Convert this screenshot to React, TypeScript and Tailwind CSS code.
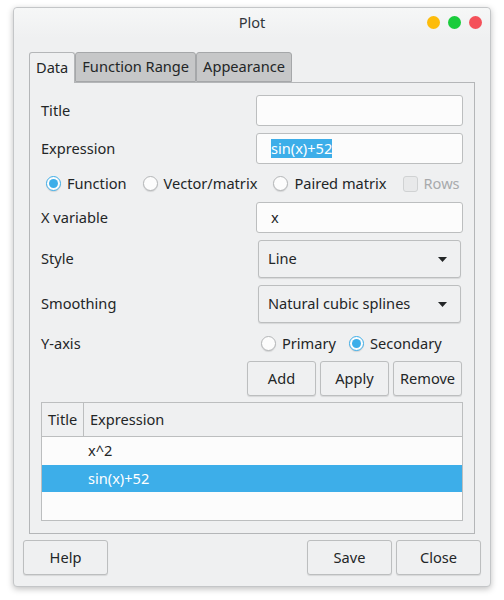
import React from "react";

const font = { fontFamily: '"Noto Sans", "Open Sans", sans-serif' };

const Radio = ({ checked, label }: { checked?: boolean; label: string }) => (
  <label className="flex items-center gap-[6px] whitespace-nowrap">
    <span
      className={`w-[15px] h-[15px] rounded-full border flex items-center justify-center ${
        checked ? "border-[#3daee9] bg-[#fcfcfc]" : "border-[#b4b6b8] bg-[#fcfcfc]"
      } shadow-[0_1px_1px_rgba(0,0,0,0.12)]`}
    >
      {checked && <span className="w-[9px] h-[9px] rounded-full bg-[#3daee9]" />}
    </span>
    <span>{label}</span>
  </label>
);

const Button = ({ children, className = "" }: { children: React.ReactNode; className?: string }) => (
  <button
    className={`flex items-center justify-center rounded-[3px] border border-[#bcbebf] bg-[#eff0f1] shadow-[0_1px_1px_rgba(0,0,0,0.1)] ${className}`}
  >
    {children}
  </button>
);

const Combo = ({ value }: { value: string }) => (
  <div className="ml-[2px] w-[203px] h-[38px] flex items-center justify-between pl-[9px] pr-[13px] rounded-[3px] border border-[#bcbebf] bg-[#eff0f1] shadow-[0_1px_1px_rgba(0,0,0,0.1)]">
    <span>{value}</span>
    <svg width="9" height="5" viewBox="0 0 9 5">
      <path d="M0 0 L9 0 L4.5 5 Z" fill="#232627" />
    </svg>
  </div>
);

const Field = ({ children }: { children?: React.ReactNode }) => (
  <div className="w-[207px] h-[31px] flex items-center px-[14px] rounded-[3px] border border-[#bcbebf] bg-[#fcfcfc]">
    {children}
  </div>
);

export default function App() {
  return (
    <div className="w-[504px] h-[600px] bg-white pt-[7px] pl-[13px] text-[14.6px] text-[#232627]" style={font}>
      <div className="w-[478px] h-[580px] flex flex-col bg-[#eff0f1] rounded-[4px] border border-[#c4c6c8] shadow-[0_2px_6px_rgba(0,0,0,0.25)]">
        {/* Title bar */}
        <div className="relative h-[30px] flex items-center justify-center bg-gradient-to-b from-[#f6f7f7] to-[#eff0f1] rounded-t-[4px]">
          <span className="text-[#31363b] -mt-[1px]">Plot</span>
          <div className="absolute right-[8px] top-[8px] flex gap-[8px]">
            <span className="w-[13px] h-[13px] rounded-full bg-[#fdbc0b]" />
            <span className="w-[13px] h-[13px] rounded-full bg-[#1acc3c]" />
            <span className="w-[13px] h-[13px] rounded-full bg-[#f4515a]" />
          </div>
        </div>

        {/* Tabs */}
        <div className="mt-[14px] ml-[15px] flex">
          <div className="relative z-10 h-[31px] px-[6px] flex items-center border border-b-0 border-[#b4b6b8] rounded-t-[3px] bg-[#eff0f1]">
            Data
          </div>
          <div className="h-[30px] px-[6px] flex items-center border border-[#a5a7a9] rounded-t-[3px] bg-[#c6c7c8]">
            Function Range
          </div>
          <div className="h-[30px] px-[6px] flex items-center border border-[#a5a7a9] rounded-t-[3px] bg-[#c6c7c8]">
            Appearance
          </div>
        </div>

        {/* Tab panel */}
        <div className="-mt-[1px] ml-[15px] w-[446px] h-[452px] border border-[#b4b6b8] px-[11px] pt-[12px] flex flex-col">
          <div className="flex items-center justify-between h-[31px]">
            <span>Title</span>
            <Field />
          </div>
          <div className="mt-[7px] flex items-center justify-between h-[31px]">
            <span>Expression</span>
            <Field>
              <span className="bg-[#3daee9] text-white leading-[19px]">sin(x)+52</span>
            </Field>
          </div>
          <div className="mt-[7px] h-[26px] flex items-center pl-[5px] gap-[16px]">
            <Radio checked label="Function" />
            <Radio label="Vector/matrix" />
            <Radio label="Paired matrix" />
            <label className="flex items-center gap-[6px] text-[#a8aaac]">
              <span className="w-[15px] h-[16px] rounded-[3px] border border-[#d0d2d3] bg-[#e8e9ea]" />
              <span>Rows</span>
            </label>
          </div>
          <div className="mt-[5px] flex items-center justify-between h-[31px]">
            <span>X variable</span>
            <Field>x</Field>
          </div>
          <div className="mt-[7px] flex items-center justify-between h-[38px]">
            <span>Style</span>
            <div className="w-[207px]"><Combo value="Line" /></div>
          </div>
          <div className="mt-[7px] flex items-center justify-between h-[38px]">
            <span>Smoothing</span>
            <div className="w-[207px]"><Combo value="Natural cubic splines" /></div>
          </div>
          <div className="mt-[8px] flex items-center justify-between h-[26px]">
            <span>Y-axis</span>
            <div className="w-[207px] flex items-center pl-[5px] gap-[13px]">
              <Radio label="Primary" />
              <Radio checked label="Secondary" />
            </div>
          </div>
          <div className="mt-[4px] flex justify-end gap-[4px] pr-[1px]">
            <Button className="w-[69px] h-[35px]">Add</Button>
            <Button className="w-[69px] h-[35px]">Apply</Button>
            <Button className="w-[69px] h-[35px]">Remove</Button>
          </div>

          {/* Table */}
          <div className="mt-[6px] w-[422px] h-[119px] border border-[#bcbebf] bg-[#fcfcfc] flex flex-col">
            <div className="h-[34px] flex bg-[#eff0f1] border-b border-[#bcbebf]">
              <div className="w-[42px] flex items-center pl-[6px] border-r border-[#bcbebf]">Title</div>
              <div className="flex items-center pl-[6px]">Expression</div>
            </div>
            <div className="h-[28px] flex items-center pl-[46px]">x^2</div>
            <div className="h-[27px] flex items-center pl-[46px] bg-[#3daee9] text-white">sin(x)+52</div>
          </div>
        </div>

        {/* Bottom buttons */}
        <div className="mt-[6px] px-[9px] flex items-center">
          <Button className="w-[85px] h-[35px]">Help</Button>
          <div className="flex-1" />
          <Button className="w-[85px] h-[35px]">Save</Button>
          <Button className="ml-[4px] w-[85px] h-[35px]">Close</Button>
        </div>
      </div>
    </div>
  );
}
